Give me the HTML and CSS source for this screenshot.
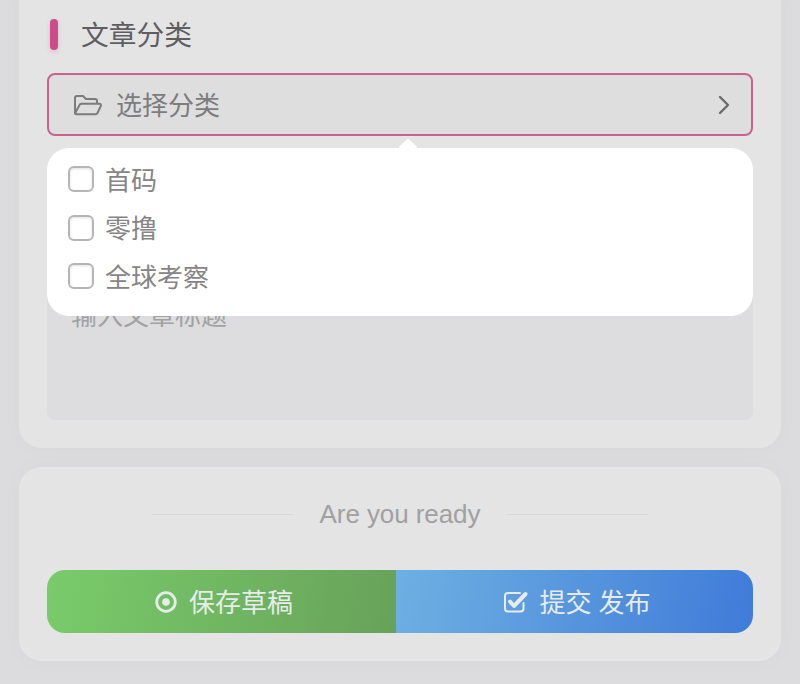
FILE: index.html
```html
<!DOCTYPE html>
<html lang="zh">
<head>
<meta charset="utf-8">
<title>文章分类</title>
<link rel="stylesheet" href="styles.css">
</head>
<body>
<main class="page">
  <section class="card card-form">
    <h2 class="title"><span class="title-bar"></span><span class="title-text">文章分类</span></h2>
    <div class="select-wrap">
      <div class="select">
        <svg class="folder" viewBox="0 0 30 22" width="30" height="22" fill="none" stroke="currentColor" stroke-width="2" stroke-linejoin="round" stroke-linecap="round"><path d="M2 19V4a2 2 0 0 1 2-2h6l3 3h9a2 2 0 0 1 2 2v2"/><path d="M2 19.500 6.500 11a2 2 0 0 1 1.800-1.200H26.500a1.500 1.500 0 0 1 1.400 2L24.500 19a2 2 0 0 1-1.800 1.200H3.500A1.500 1.500 0 0 1 2 19.500z"/></svg>
        <span class="select-text">选择分类</span>
        <svg class="chevron" viewBox="0 0 12 20" width="12" height="20" fill="none" stroke="currentColor" stroke-width="2.200" stroke-linecap="round" stroke-linejoin="round"><path d="M2 2l8 8-8 8"/></svg>
      </div>
      <div class="popup">
        <label class="option"><span class="box"></span><span class="option-text">首码</span></label>
        <label class="option"><span class="box"></span><span class="option-text">零撸</span></label>
        <label class="option"><span class="box"></span><span class="option-text">全球考察</span></label>
      </div>
    </div>
    <div class="textarea">输入文章标题</div>
  </section>
  <section class="card card-actions">
    <div class="ready"><span class="rule"></span><span class="ready-text">Are you ready</span><span class="rule"></span></div>
    <div class="buttons">
      <div class="btn btn-save">
        <svg viewBox="0 0 22 22" width="22" height="22" fill="none"><circle cx="11" cy="11" r="9.300" stroke="currentColor" stroke-width="2.800"/><circle cx="11" cy="11" r="3.800" fill="currentColor"/></svg>
        <span class="btn-text">保存草稿</span>
      </div>
      <div class="btn btn-publish">
        <svg viewBox="0 0 24 22" width="24" height="22" fill="none" stroke="currentColor" stroke-linecap="round" stroke-linejoin="round"><path d="M19.500 12v5.500a3 3 0 0 1-3 3H4a3 3 0 0 1-3-3V5a3 3 0 0 1 3-3h12" stroke-width="2"/><path d="M6 10.500l4 4.500 11.500-12" stroke-width="4"/></svg>
        <span class="btn-text">提交 发布</span>
      </div>
    </div>
  </section>
</main>
</body>
</html>
```
FILE: styles.css
```css
* { box-sizing: border-box; }
html, body { margin: 0; height: 684px; overflow: hidden; }
body {
  background: #dcdcde;
  font-family: "Liberation Sans", "Noto Sans CJK SC", sans-serif;
}
.page { padding: 0 19px; display: flex; flex-direction: column; gap: 19px; }
.card {
  background: #e4e4e5;
  border-radius: 22px;
  box-shadow: 0 0 24px rgba(0, 0, 0, 0.025);
  padding: 0 28px;
}
.card-form { margin-top: -20px; height: 468px; padding-top: 39px; }
.title {
  margin: 0;
  display: flex;
  align-items: center;
  height: 31px;
  font-size: 27.750px;
  font-weight: 400;
  color: #5e5e62;
  font-family: "Noto Sans CJK SC", sans-serif;
}
.title-text { padding-bottom: 4px; }
.title-bar {
  width: 8px;
  height: 31px;
  margin: 0 23px 0 3px;
  border-radius: 4px;
  background: #cb4c88;
  box-shadow: 0 2px 5px rgba(203, 76, 136, 0.25);
}
.select-wrap { position: relative; margin-top: 23px; }
.select {
  height: 63px;
  display: flex;
  align-items: center;
  padding: 0 24px;
  border: 2px solid #c8628f;
  border-radius: 8px;
  background: #dedede;
  color: #7c7c7e;
}
.folder { margin-right: 13px; flex: none; }
.select-text {
  flex: 1;
  font-size: 26px;
  padding-bottom: 2px;
  font-family: "Noto Sans CJK SC", sans-serif;
}
.chevron { color: #666668; flex: none; margin-right: -3px; }
.popup {
  position: absolute;
  left: 0;
  right: 0;
  top: 75px;
  height: 168px;
  z-index: 2;
  padding: 7px 21px;
  background: #fff;
  border-radius: 22px;
}
.popup::before {
  content: "";
  position: absolute;
  left: 354px;
  top: -7px;
  width: 14px;
  height: 14px;
  background: #fff;
  border-radius: 2px;
  transform: rotate(45deg);
}
.option {
  display: flex;
  align-items: center;
  height: 48.500px;
  font-size: 26px;
  color: #858587;
  font-family: "Noto Sans CJK SC", sans-serif;
}
.option-text { padding-bottom: 2px; }
.box {
  width: 26px;
  height: 26px;
  margin-right: 11px;
  border: 2px solid #b5b5b7;
  border-radius: 6px;
  background: #fff;
  box-shadow: inset 0 1px 3px rgba(0, 0, 0, 0.12);
}
.textarea {
  margin-top: 64px;
  height: 220px;
  padding: 95px 24px 0;
  background: #dddddf;
  border-radius: 8px;
  font-size: 26px;
  line-height: 38px;
  color: #a2a2a4;
  font-family: "Noto Sans CJK SC", sans-serif;
}
.card-actions { height: 194px; padding-top: 27px; }
.ready {
  display: flex;
  align-items: center;
  justify-content: center;
  height: 40px;
  gap: 27px;
}
.rule { width: 141px; height: 1px; background: #d9d9da; }
.ready-text { font-size: 26px; color: #a0a0a2; letter-spacing: -0.080px; padding-top: 1px; }
.buttons {
  display: flex;
  height: 63px;
  margin-top: 36px;
  border-radius: 18px;
  overflow: hidden;
}
.btn {
  display: flex;
  align-items: center;
  justify-content: center;
  gap: 12px;
  padding-left: 5px;
  color: #e6ecec;
  font-size: 26px;
  font-family: "Noto Sans CJK SC", sans-serif;
}
.btn-text { padding-bottom: 2px; word-spacing: 1px; }
.btn-save { width: 349px; background: linear-gradient(100deg, #79cc6a, #68a25a); }
.btn-publish { flex: 1; background: linear-gradient(100deg, #6eb0e2, #3f7bd9); }
```
